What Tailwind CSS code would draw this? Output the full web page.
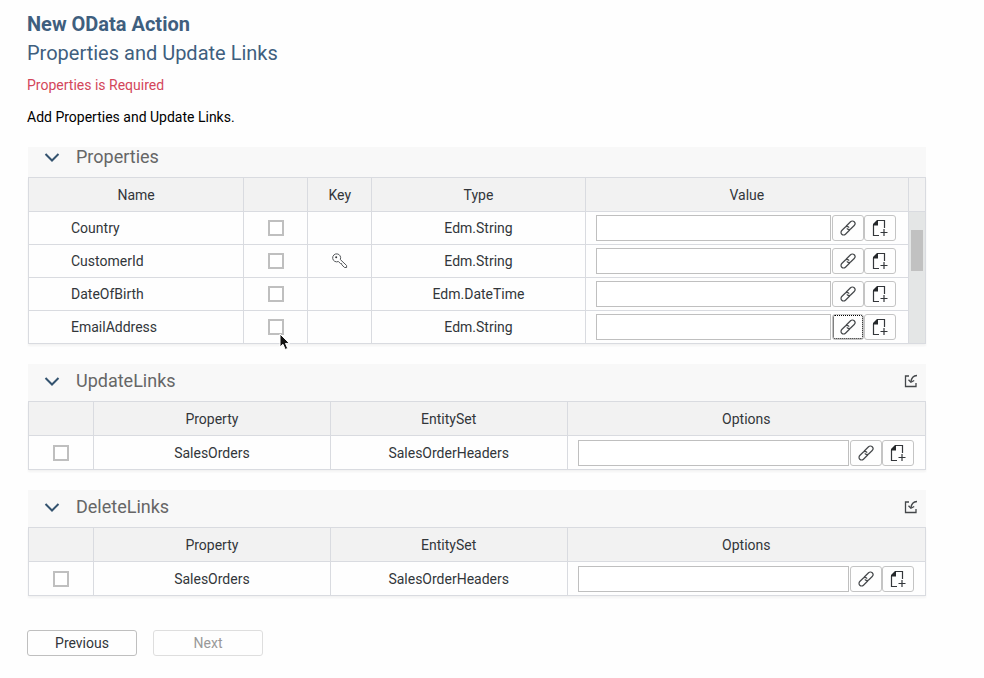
<!DOCTYPE html>
<html lang="en">
<head>
<meta charset="utf-8">
<meta name="viewport" content="width=device-width, initial-scale=1">
<title>New OData Action</title>
<script src="https://cdn.jsdelivr.net/npm/@tailwindcss/browser@4"></script>
</head>
<body class="bg-[#fefefe] font-[Roboto,'Liberation_Sans',sans-serif] text-sm text-[#32363a]">
<svg class="hidden" aria-hidden="true">
  <symbol id="chevron" viewBox="0 0 16 16"><path d="M1.5 5 8 11.5 14.5 5" fill="none" stroke="#34536f" stroke-width="2"/></symbol>
  <symbol id="link" viewBox="0 0 16 16"><g fill="none" stroke="#44474a" stroke-width="1.2" stroke-linecap="round" transform="rotate(-45 8 8)"><path d="M7.800 10.600H1.800A2.600 2.600 0 0 1 1.800 5.400H6.500A2.600 2.600 0 0 1 9.100 8"/><path d="M8.200 5.400H14.200A2.600 2.600 0 0 1 14.200 10.600H9.500A2.600 2.600 0 0 1 6.900 8"/></g></symbol>
  <symbol id="newdoc" viewBox="0 0 18 18"><path d="M6.500 1.500H13.500V9M8 16.500H2.500V6" fill="none" stroke="#33363a" stroke-width="1.2"/><path d="M2 6.500V5L6 1H7V6.500Z" fill="#25282b"/><path d="M9.500 13.500H16.500M13 10V17" stroke="#33363a" stroke-width="1.2"/></symbol>
  <symbol id="key" viewBox="0 0 16 16"><path d="M8.300 6.500A4 4 0 1 0 6.300 8.500L8.500 10.500 9.600 10.600 9.800 11.900 12.600 14.500H14.600V12.500Z" fill="none" stroke="#55585b" stroke-width="1" stroke-linejoin="round"/><circle cx="4.200" cy="4.200" r="1" fill="#33363a"/></symbol>
  <symbol id="import" viewBox="0 0 14 14"><g fill="none" stroke="#44474a" stroke-width="1.300"><path d="M5 2H1.500V12.500H12V9"/><path d="M13 1.500C9.500 1.700 7.300 4 6.900 8"/><path d="M4.500 5.700 6.900 8.300 10.200 6.500"/></g></symbol>
</svg>

<main class="pt-3 pr-[58px] pb-5 pl-7">
  <header class="-ml-px">
    <h1 class="text-xl leading-6 font-bold text-[#3f5f7e]">New OData Action</h1>
    <h2 class="mt-1 text-xl leading-[26px] text-[#3f5f7e]">Properties and Update Links</h2>
    <p class="mt-2 leading-[22px] text-[#d3465a]">Properties is Required</p>
    <p class="mt-2.5 leading-[22px] text-black">Add Properties and Update Links.</p>
  </header>

  <section class="mt-[19px]">
    <div class="flex items-center bg-[#f8f8f8] pr-2 pb-2.5 pl-4">
      <button class="mr-4" aria-label="Collapse Properties"><svg class="size-4"><use href="#chevron"/></svg></button>
      <h3 class="text-lg leading-5 text-[#666]">Properties</h3>
    </div>
    <table class="w-full table-fixed border-collapse border border-[#d9dbe0] text-center shadow-[0_2px_2px_#f3f3f3] [&_td]:border [&_td]:border-[#d9dbe0] [&_td]:p-0 [&_th]:border [&_th]:border-[#d9dbe0] [&_th]:p-0 [&_th]:font-normal">
      <colgroup><col class="w-[24%]"><col class="w-16"><col class="w-16"><col class="w-[23.8%]"><col><col class="w-[17px]"></colgroup>
      <thead class="bg-[#f2f2f2]">
        <tr class="h-[34px]"><th>Name</th><th aria-label="Select"></th><th>Key</th><th>Type</th><th>Value</th><th aria-label="Scroll"></th></tr>
      </thead>
      <tbody>
        <tr class="h-[33px]">
          <td><div class="pl-[42px] text-left">Country</div></td>
          <td><input type="checkbox" aria-label="Country" class="block mx-auto size-4 appearance-none border-2 border-[#bfbfbf] bg-white"></td>
          <td></td><td>Edm.String</td>
          <td><div class="flex gap-px pr-3 pl-2.5"><input aria-label="Country value" class="h-[26px] min-w-0 flex-1 border border-[#bfbfbf] bg-white px-2"><button aria-label="Link" class="flex h-[26px] w-8 items-center justify-center rounded-[3px] border border-[#c4c4c4]"><svg class="size-4"><use href="#link"/></svg></button><button aria-label="New expression" class="-ml-px flex h-[26px] w-8 items-center justify-center rounded-[3px] border border-[#c4c4c4]"><svg class="size-[18px]"><use href="#newdoc"/></svg></button></div></td>
          <td rowspan="4" class="bg-[#e4e6e6] align-top"><div class="mx-auto mt-[18px] h-[41px] w-3 bg-[#c1c1c1]"></div></td>
        </tr>
        <tr class="h-[33px]">
          <td><div class="pl-[42px] text-left">CustomerId</div></td>
          <td><input type="checkbox" aria-label="CustomerId" class="block mx-auto size-4 appearance-none border-2 border-[#bfbfbf] bg-white"></td>
          <td><svg class="mx-auto size-4" role="img" aria-label="Key"><use href="#key"/></svg></td><td>Edm.String</td>
          <td><div class="flex gap-px pr-3 pl-2.5"><input aria-label="CustomerId value" class="h-[26px] min-w-0 flex-1 border border-[#bfbfbf] bg-white px-2"><button aria-label="Link" class="flex h-[26px] w-8 items-center justify-center rounded-[3px] border border-[#c4c4c4]"><svg class="size-4"><use href="#link"/></svg></button><button aria-label="New expression" class="-ml-px flex h-[26px] w-8 items-center justify-center rounded-[3px] border border-[#c4c4c4]"><svg class="size-[18px]"><use href="#newdoc"/></svg></button></div></td>
        </tr>
        <tr class="h-[33px]">
          <td><div class="pl-[42px] text-left">DateOfBirth</div></td>
          <td><input type="checkbox" aria-label="DateOfBirth" class="block mx-auto size-4 appearance-none border-2 border-[#bfbfbf] bg-white"></td>
          <td></td><td>Edm.DateTime</td>
          <td><div class="flex gap-px pr-3 pl-2.5"><input aria-label="DateOfBirth value" class="h-[26px] min-w-0 flex-1 border border-[#bfbfbf] bg-white px-2"><button aria-label="Link" class="flex h-[26px] w-8 items-center justify-center rounded-[3px] border border-[#c4c4c4]"><svg class="size-4"><use href="#link"/></svg></button><button aria-label="New expression" class="-ml-px flex h-[26px] w-8 items-center justify-center rounded-[3px] border border-[#c4c4c4]"><svg class="size-[18px]"><use href="#newdoc"/></svg></button></div></td>
        </tr>
        <tr class="h-[33px]">
          <td><div class="pl-[42px] text-left">EmailAddress</div></td>
          <td><div class="relative mx-auto size-4"><input type="checkbox" aria-label="EmailAddress" class="block size-4 appearance-none border-2 border-[#bfbfbf] bg-white"><svg class="absolute top-3.5 left-[11px] h-[18px] w-3" viewBox="0 0 12 18" aria-hidden="true"><path d="M1 1V14L4 11.300 6.200 16.500 8.700 15.400 6.500 10.400H10.500Z" fill="#111" stroke="#fff" stroke-width="1"/></svg></div></td>
          <td></td><td>Edm.String</td>
          <td><div class="flex gap-px pr-3 pl-2.5"><input aria-label="EmailAddress value" class="h-[26px] min-w-0 flex-1 border border-[#bfbfbf] bg-white px-2"><button aria-label="Link" class="flex h-[26px] w-8 items-center justify-center rounded-[3px] border border-[#c4c4c4] outline-1 -outline-offset-2 outline-dotted outline-black"><svg class="size-4"><use href="#link"/></svg></button><button aria-label="New expression" class="-ml-px flex h-[26px] w-8 items-center justify-center rounded-[3px] border border-[#c4c4c4]"><svg class="size-[18px]"><use href="#newdoc"/></svg></button></div></td>
        </tr>
      </tbody>
    </table>
  </section>

  <section class="mt-5">
    <div class="flex items-center bg-[#f8f8f8] pt-[7px] pr-2 pb-2.5 pl-4">
      <button class="mr-4" aria-label="Collapse UpdateLinks"><svg class="size-4"><use href="#chevron"/></svg></button>
      <h3 class="text-lg leading-5 text-[#666]">UpdateLinks</h3>
      <button class="ml-auto" aria-label="Import UpdateLinks"><svg class="size-3.5"><use href="#import"/></svg></button>
    </div>
    <table class="w-full table-fixed border-collapse border border-[#d9dbe0] text-center shadow-[0_2px_2px_#f3f3f3] [&_td]:border [&_td]:border-[#d9dbe0] [&_td]:p-0 [&_th]:border [&_th]:border-[#d9dbe0] [&_th]:p-0 [&_th]:font-normal">
      <colgroup><col class="w-[65px]"><col class="w-[26.4%]"><col class="w-[26.4%]"><col></colgroup>
      <thead class="bg-[#f2f2f2]"><tr class="h-[34px]"><th aria-label="Select"></th><th>Property</th><th>EntitySet</th><th>Options</th></tr></thead>
      <tbody><tr class="h-[34px]">
        <td><input type="checkbox" aria-label="Update SalesOrders" class="block mx-auto size-4 appearance-none border-2 border-[#bfbfbf] bg-white"></td><td>SalesOrders</td><td>SalesOrderHeaders</td>
        <td><div class="flex gap-px pr-[11px] pl-2.5"><input aria-label="Update options" class="h-[26px] min-w-0 flex-1 border border-[#bfbfbf] bg-white px-2"><button aria-label="Link" class="flex h-[26px] w-8 items-center justify-center rounded-[3px] border border-[#c4c4c4]"><svg class="size-4"><use href="#link"/></svg></button><button aria-label="New expression" class="-ml-px flex h-[26px] w-8 items-center justify-center rounded-[3px] border border-[#c4c4c4]"><svg class="size-[18px]"><use href="#newdoc"/></svg></button></div></td>
      </tr></tbody>
    </table>
  </section>

  <section class="mt-5">
    <div class="flex items-center bg-[#f8f8f8] pt-[7px] pr-2 pb-2.5 pl-4">
      <button class="mr-4" aria-label="Collapse DeleteLinks"><svg class="size-4"><use href="#chevron"/></svg></button>
      <h3 class="text-lg leading-5 text-[#666]">DeleteLinks</h3>
      <button class="ml-auto" aria-label="Import DeleteLinks"><svg class="size-3.5"><use href="#import"/></svg></button>
    </div>
    <table class="w-full table-fixed border-collapse border border-[#d9dbe0] text-center shadow-[0_2px_2px_#f3f3f3] [&_td]:border [&_td]:border-[#d9dbe0] [&_td]:p-0 [&_th]:border [&_th]:border-[#d9dbe0] [&_th]:p-0 [&_th]:font-normal">
      <colgroup><col class="w-[65px]"><col class="w-[26.4%]"><col class="w-[26.4%]"><col></colgroup>
      <thead class="bg-[#f2f2f2]"><tr class="h-[34px]"><th aria-label="Select"></th><th>Property</th><th>EntitySet</th><th>Options</th></tr></thead>
      <tbody><tr class="h-[34px]">
        <td><input type="checkbox" aria-label="Delete SalesOrders" class="block mx-auto size-4 appearance-none border-2 border-[#bfbfbf] bg-white"></td><td>SalesOrders</td><td>SalesOrderHeaders</td>
        <td><div class="flex gap-px pr-[11px] pl-2.5"><input aria-label="Delete options" class="h-[26px] min-w-0 flex-1 border border-[#bfbfbf] bg-white px-2"><button aria-label="Link" class="flex h-[26px] w-8 items-center justify-center rounded-[3px] border border-[#c4c4c4]"><svg class="size-4"><use href="#link"/></svg></button><button aria-label="New expression" class="-ml-px flex h-[26px] w-8 items-center justify-center rounded-[3px] border border-[#c4c4c4]"><svg class="size-[18px]"><use href="#newdoc"/></svg></button></div></td>
      </tr></tbody>
    </table>
  </section>

  <footer class="mt-[34px] -ml-px flex gap-4">
    <button class="h-[26px] w-[110px] rounded-[3px] border border-[#bfbfbf]">Previous</button>
    <button disabled class="h-[26px] w-[110px] rounded-[3px] border border-[#dedede] text-[#999]">Next</button>
  </footer>
</main>
</body>
</html>
